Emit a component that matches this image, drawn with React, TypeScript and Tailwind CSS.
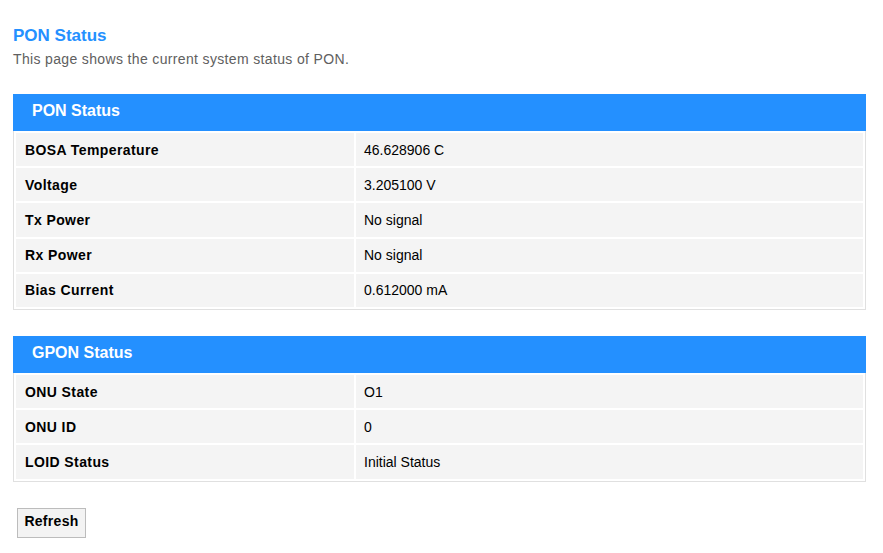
import React from 'react';

type Row = { label: string; value: string };

const ponRows: Row[] = [
  { label: 'BOSA Temperature', value: '46.628906 C' },
  { label: 'Voltage', value: '3.205100 V' },
  { label: 'Tx Power', value: 'No signal' },
  { label: 'Rx Power', value: 'No signal' },
  { label: 'Bias Current', value: '0.612000 mA' },
];

const gponRows: Row[] = [
  { label: 'ONU State', value: 'O1' },
  { label: 'ONU ID', value: '0' },
  { label: 'LOID Status', value: 'Initial Status' },
];

const StatusTable = ({ title, rows }: { title: string; rows: Row[] }) => (
  <div>
    <div className="h-[37px] bg-[#2490ff] pl-[19px] flex items-center">
      <span className="text-white text-[16px] font-bold leading-[18px] -mt-[3px]">{title}</span>
    </div>
    <div className="border-x border-b border-[#e0e0e0] p-[2px] flex flex-col gap-[2px]">
      {rows.map((r) => (
        <div key={r.label} className="flex gap-[2px] h-[33.2px]">
          <div className="w-[338px] shrink-0 bg-[#f4f4f4] pl-[9px] flex items-center">
            <span className="text-[14px] font-bold text-black leading-[16px] tracking-[0.4px]">{r.label}</span>
          </div>
          <div className="flex-1 bg-[#f4f4f4] pl-[8px] flex items-center">
            <span className="text-[14px] text-black leading-[16px]">{r.value}</span>
          </div>
        </div>
      ))}
    </div>
  </div>
);

export default function App() {
  return (
    <div className="min-h-screen bg-white font-['Liberation_Sans',Arial,sans-serif] pl-[13px] pr-[17px] pt-[26px]">
      <h1 className="text-[17px] font-bold text-[#2490ff] leading-[20px]">PON Status</h1>
      <p className="text-[14px] text-[#606060] leading-[18px] mt-[4px] tracking-[0.35px]">
        This page shows the current system status of PON.
      </p>

      <div className="mt-[26px]">
        <StatusTable title="PON Status" rows={ponRows} />
      </div>

      <div className="mt-[26px]">
        <StatusTable title="GPON Status" rows={gponRows} />
      </div>

      <div className="mt-[26px] pl-[4px]">
        <button className="w-[69px] h-[30px] pb-[3px] bg-[#f3f3f3] border border-[#bcbcbc] text-[14px] font-bold text-black leading-[16px] tracking-[0.3px]">
          Refresh
        </button>
      </div>
    </div>
  );
}
